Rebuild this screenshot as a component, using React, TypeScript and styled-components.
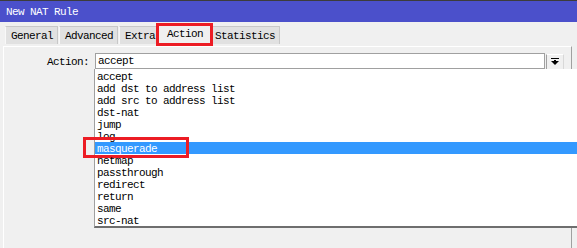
import React from "react";
import styled, { createGlobalStyle } from "styled-components";

const actions = [
    "accept",
    "add dst to address list",
    "add src to address list",
    "dst-nat",
    "jump",
    "log",
    "masquerade",
    "netmap",
    "passthrough",
    "redirect",
    "return",
    "same",
    "src-nat",
];

const tabs = ["General", "Advanced", "Extra", "Action", "Statistics"];

const DropIcon = () => (
    <svg width="8" height="8" viewBox="0 0 8 8">
        <rect x="0" y="0" width="8" height="1" fill="#000" />
        <path d="M0 3 H8 L4 7 Z" fill="#000" />
        <rect x="3" y="2" width="2" height="2" fill="#000" />
    </svg>
);

const App: React.FC = () => {
    const activeTab = "Action",
        activeIndex = tabs.indexOf(activeTab),
        selected = "masquerade";

    return (
        <Window>
            <GlobalStyle />
            <TitleBar>New NAT Rule</TitleBar>
            <TabStrip>
                {tabs.map((t, i) => (
                    <Tab
                        key={t}
                        $active={i === activeIndex}
                        $beforeActive={i === activeIndex - 1}
                        $afterActive={i === activeIndex + 1}
                    >
                        {t}
                    </Tab>
                ))}
            </TabStrip>
            <Panel>
                <FieldRow>
                    <Label>Action:</Label>
                    <Combo>
                        <ComboValue>accept</ComboValue>
                        <ComboButton>
                            <DropIcon />
                        </ComboButton>
                        <Menu>
                            {actions.map(a => (
                                <MenuItem key={a} $selected={a === selected}>
                                    {a}
                                </MenuItem>
                            ))}
                        </Menu>
                    </Combo>
                </FieldRow>
            </Panel>
        </Window>
    );
};

export default App;

const GlobalStyle = createGlobalStyle`
    html, body {
        margin: 0;
        padding: 0;
        background: #f0f0f0;
    }
    body {
        font-family: "Liberation Mono", "DejaVu Sans Mono", monospace;
        font-size: 11px;
        letter-spacing: -0.6px;
        color: #000;
    }
`;

const Window = styled.div`
    width: 577px;
    height: 248px;
    overflow: hidden;
    background: #f0f0f0;
    display: flex;
    flex-direction: column;
`;

const TitleBar = styled.div`
    height: 21px;
    border-top: 1px solid #3c3c3c;
    background: #4b50cb;
    color: #fff;
    padding-left: 6px;
    display: flex;
    align-items: center;
    flex-shrink: 0;
`;

const TabStrip = styled.div`
    height: 24px;
    display: flex;
    align-items: flex-end;
    padding-left: 5px;
    flex-shrink: 0;
`;

const Tab = styled.div<{ $active?: boolean; $beforeActive?: boolean; $afterActive?: boolean }>`
    box-sizing: border-box;
    display: flex;
    align-items: center;
    height: 18px;
    margin: 0 1px 2px 0;
    padding: 1px 4px 0 5px;
    background: #e1e1e1;
    border: 1px solid #c8c8c8;
    border-left-color: #f8f8f8;
    border-bottom: none;

    ${p => p.$beforeActive && `
        margin-right: 0;
        padding-right: 1px;
        border-right: none;
    `}

    ${p => p.$afterActive && `
        padding-left: 2px;
        border-left: none;
    `}

    ${p => p.$active && `
        height: 23px;
        margin: 0;
        padding: 0 7px 2px 8px;
        background: #f0f0f0;
        border: 3px solid #ec1c24;
    `}
`;

const Panel = styled.div`
    flex: 1;
    margin: 0 5px 0 3px;
    border-top: 1px solid #fff;
    border-left: 1px solid #fff;
    border-right: 1px solid #a0a0a0;
    padding-top: 6px;
`;

const FieldRow = styled.div`
    display: flex;
    align-items: center;
`;

const Label = styled.div`
    width: 85px;
    text-align: right;
    padding-right: 6px;
    padding-top: 1px;
`;

const Combo = styled.div`
    position: relative;
    display: flex;
    align-items: flex-start;
`;

const ComboValue = styled.div`
    box-sizing: border-box;
    width: 450px;
    height: 16px;
    border: 1px solid #a0a0a0;
    background: #fff;
    padding: 1px 0 0 2px;
    line-height: 13px;
`;

const ComboButton = styled.div`
    box-sizing: border-box;
    width: 18px;
    height: 15px;
    margin: 1px 0 0 1px;
    border-left: 1px solid #a0a0a0;
    border-top: 1px solid #fff;
    border-right: 1px solid #d8d8d8;
    background: #f0f0f0;
    display: flex;
    align-items: center;
    justify-content: center;
`;

const Menu = styled.div`
    position: absolute;
    top: 16px;
    left: -1px;
    width: 490px;
    box-sizing: border-box;
    background: #fff;
    border-left: 1px solid #a0a0a0;
    border-bottom: 2px solid #6e6e6e;
    padding-top: 1px;
    z-index: 2;
`;

const MenuItem = styled.div<{ $selected?: boolean }>`
    position: relative;
    box-sizing: border-box;
    height: 12px;
    padding: 2px 0 0 2px;
    line-height: 10px;
    background: ${p => (p.$selected ? "#3399ff" : "transparent")};
    color: ${p => (p.$selected ? "#fff" : "#000")};

    ${p => p.$selected && `
        &::after {
            content: "";
            position: absolute;
            left: -12px;
            top: -5px;
            width: 106px;
            height: 21px;
            box-sizing: border-box;
            border: 3px solid #ec1c24;
        }
    `}
`;
